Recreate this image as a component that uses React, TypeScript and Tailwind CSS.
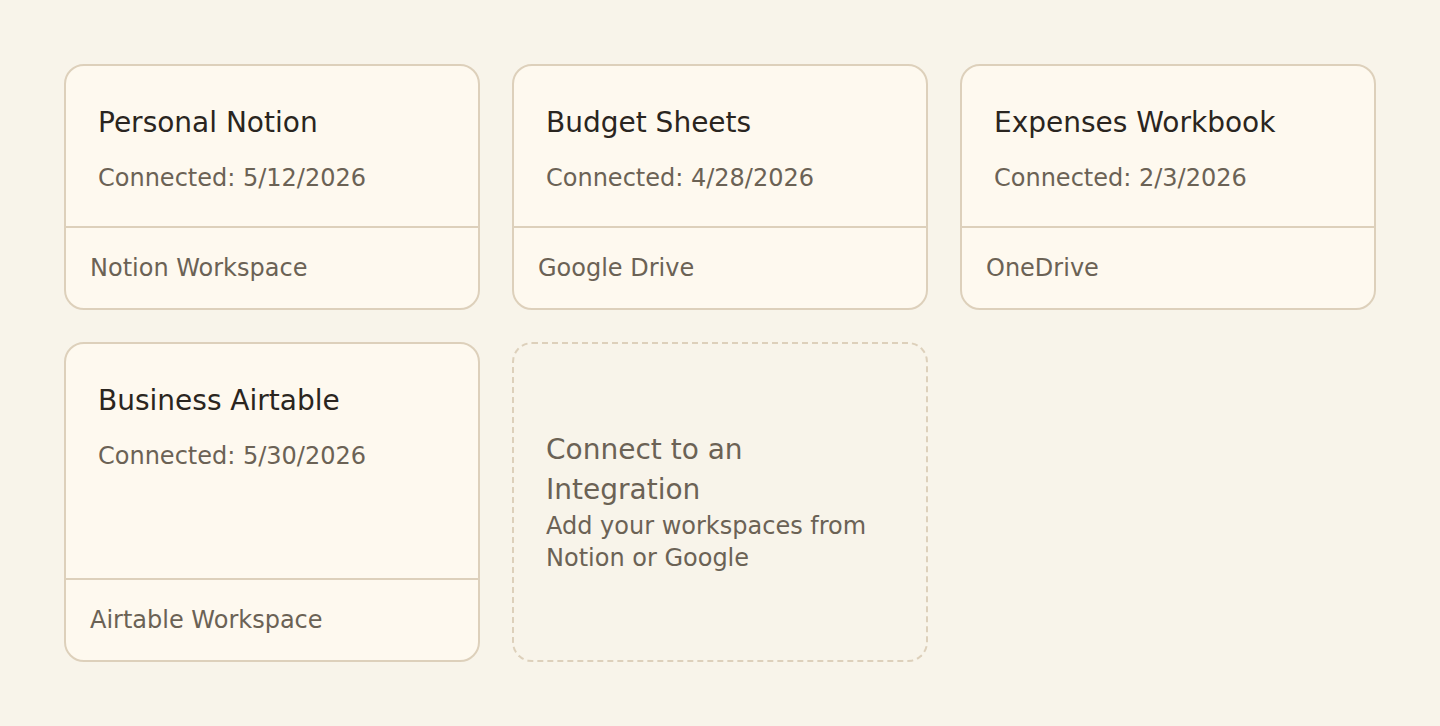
import React from "react";

type Item = { title: string; date: string; source: string };

const items: Item[] = [
  { title: "Personal Notion", date: "5/12/2026", source: "Notion Workspace" },
  { title: "Budget Sheets", date: "4/28/2026", source: "Google Drive" },
  { title: "Expenses Workbook", date: "2/3/2026", source: "OneDrive" },
  { title: "Business Airtable", date: "5/30/2026", source: "Airtable Workspace" },
];

function Card({ item }: { item: Item }) {
  return (
    <div className="flex flex-col rounded-[20px] border-2 border-[#ddd0bb] bg-[#fef9ef]">
      <div className="flex-1 px-8 pt-[33px] pb-[31px]">
        <div className="text-[28px] leading-[48px] text-[#2a2520]">{item.title}</div>
        <div className="mt-[14px] text-[24px] leading-[34px] text-[#6b6255]">
          Connected: {item.date}
        </div>
      </div>
      <div className="border-t-2 border-[#ddd0bb] px-6 py-6 text-[24px] leading-8 text-[#6b6255]">
        {item.source}
      </div>
    </div>
  );
}

export default function App() {
  return (
    <div
      className="min-h-[726px] w-full bg-[#f8f4ea] px-16 pt-16"
      style={{ fontFamily: '"DejaVu Sans", sans-serif' }}
    >
      <div className="grid grid-cols-3 gap-8">
        {items.map((it) => (
          <Card key={it.title} item={it} />
        ))}
        <div className="flex min-h-[320px] flex-col justify-center rounded-[20px] border-2 border-dashed border-[#ddd0bb] px-8">
          <div className="text-[28px] leading-[40px] text-[#6b6255]">Connect to an Integration</div>
          <div className="text-[24px] leading-[32px] text-[#6b6255]">
            Add your workspaces from Notion or Google
          </div>
        </div>
      </div>
    </div>
  );
}
